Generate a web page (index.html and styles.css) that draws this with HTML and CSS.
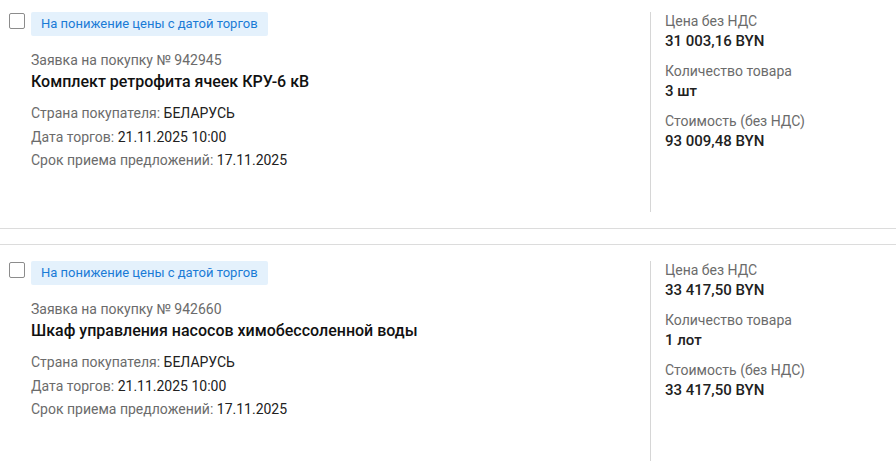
FILE: index.html
```html
<!DOCTYPE html>
<html lang="ru">
<head>
  <meta charset="UTF-8" />
  <meta name="viewport" content="width=device-width, initial-scale=1.0"/>
  <title>Заявки на покупку</title>
  <link rel="stylesheet" href="styles.css">
</head>
<body>
  <div class="list">
    <div class="lot">
      <div class="lot-main">
        <div class="lot-head">
          <span class="check"></span>
          <span class="tag">На понижение цены с датой торгов</span>
        </div>
        <div class="lot-body">
          <div class="lot-number">Заявка на покупку № 942945</div>
          <div class="lot-title">Комплект ретрофита ячеек КРУ-6 кВ</div>
          <div class="lot-info">
            <div>Страна покупателя: <span class="val">БЕЛАРУСЬ</span></div>
            <div>Дата торгов: <span class="val">21.11.2025 10:00</span></div>
            <div>Срок приема предложений: <span class="val">17.11.2025</span></div>
          </div>
        </div>
      </div>
      <div class="lot-side">
        <div class="label">Цена без НДС</div>
        <div class="value">31 003,16 BYN</div>
        <div class="label">Количество товара</div>
        <div class="value">3 шт</div>
        <div class="label">Стоимость (без НДС)</div>
        <div class="value">93 009,48 BYN</div>
      </div>
    </div>

    <div class="lot">
      <div class="lot-main">
        <div class="lot-head">
          <span class="check"></span>
          <span class="tag">На понижение цены с датой торгов</span>
        </div>
        <div class="lot-body">
          <div class="lot-number">Заявка на покупку № 942660</div>
          <div class="lot-title">Шкаф управления насосов химобессоленной воды</div>
          <div class="lot-info">
            <div>Страна покупателя: <span class="val">БЕЛАРУСЬ</span></div>
            <div>Дата торгов: <span class="val">21.11.2025 10:00</span></div>
            <div>Срок приема предложений: <span class="val">17.11.2025</span></div>
          </div>
        </div>
      </div>
      <div class="lot-side">
        <div class="label">Цена без НДС</div>
        <div class="value">33 417,50 BYN</div>
        <div class="label">Количество товара</div>
        <div class="value">1 лот</div>
        <div class="label">Стоимость (без НДС)</div>
        <div class="value">33 417,50 BYN</div>
      </div>
    </div>
  </div>
</body>
</html>
```

FILE: styles.css
```css
body {
  margin: 0;
  font-family: Roboto, 'Liberation Sans', sans-serif;
  background: #fff;
  color: #212121;
  overflow: hidden;
}
.list {
  margin-top: -5px;
}
.lot {
  display: flex;
  border-top: 1px solid #dcdcdc;
  border-bottom: 1px solid #dcdcdc;
  padding: 16px 0 16px 9px;
  margin-bottom: 15px;
  height: 200px;
}
.lot-main {
  flex: 1;
}
.lot-head {
  display: flex;
  align-items: flex-start;
}
.check {
  width: 14px;
  height: 14px;
  border: 1px solid #8c8c8c;
  border-radius: 2px;
  margin: 1px 6px 0 0;
}
.tag {
  background: #e4f1fc;
  color: #1a7bd6;
  font-size: 13px;
  line-height: 24px;
  padding: 0 10px;
  border-radius: 2px;
}
.lot-body {
  padding: 14px 0 0 22px;
}
.lot-number {
  font-size: 14px;
  line-height: 20px;
  color: #6b6b6b;
}
.lot-title {
  font-size: 16px;
  font-weight: 500;
  line-height: 24px;
  color: #111;
  margin-bottom: 8px;
}
.lot-info {
  font-size: 14px;
  line-height: 23.5px;
  color: #6b6b6b;
}
.lot-info .val {
  color: #212121;
}
.lot-side {
  width: 231px;
  border-left: 1px solid #d6d6d6;
  padding-left: 14px;
}
.label {
  font-size: 14px;
  line-height: 18px;
  color: #6b6b6b;
}
.value {
  font-size: 15px;
  font-weight: 500;
  line-height: 22px;
  color: #212121;
  margin-bottom: 10px;
}
```
